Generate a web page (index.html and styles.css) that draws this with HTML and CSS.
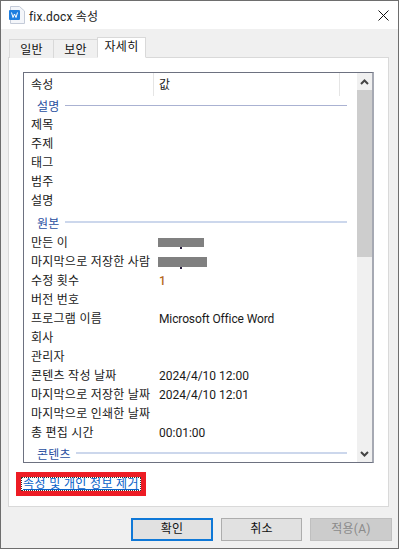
FILE: index.html
```html
<!DOCTYPE html>
<html lang="ko">
<head>
<meta charset="utf-8">
<title>fix.docx 속성</title>
<link rel="stylesheet" href="styles.css">
</head>
<body>
<div class="window">
  <div class="titlebar">
    <svg class="file-icon" width="16" height="18" viewBox="0 0 16 18">
      <path d="M1.5 .5H10.5L15.5 5V17.5H1.5Z" fill="#f4f6fa" stroke="#c4cbd8"/>
      <rect x="0" y="4" width="11" height="10" rx="1" fill="#1f7fe0"/>
      <path d="M2.5 6.5L4 11.5L5.5 8L7 11.5L8.5 6.5" fill="none" stroke="#fff" stroke-width="1"/>
    </svg>
    <span class="title">fix.docx 속성</span>
    <svg class="close" width="11" height="11" viewBox="0 0 11 11">
      <path d="M.5 .5L10.5 10.5M10.5 .5L.5 10.5" stroke="#111" stroke-width="1" fill="none"/>
    </svg>
  </div>
  <div class="body">
    <div class="tabs">
      <div class="tab">일반</div>
      <div class="tab">보안</div>
      <div class="tab active">자세히</div>
    </div>
    <div class="panel">
      <div class="list">
        <div class="rows">
          <div class="head">
            <div class="head-name">속성</div>
            <div class="head-value">값</div>
            <div class="head-rest"></div>
          </div>
          <div class="group first"><span>설명</span><i></i></div>
          <div class="row"><span class="n">제목</span></div>
          <div class="row"><span class="n">주제</span></div>
          <div class="row"><span class="n">태그</span></div>
          <div class="row"><span class="n">범주</span></div>
          <div class="row"><span class="n">설명</span></div>
          <div class="group"><span>원본</span><i class="soft"></i></div>
          <div class="row"><span class="n">만든 이</span><span class="redact r1"></span></div>
          <div class="row"><span class="n">마지막으로 저장한 사람</span><span class="redact r2"></span></div>
          <div class="row"><span class="n">수정 횟수</span><span class="v count">1</span></div>
          <div class="row"><span class="n">버전 번호</span></div>
          <div class="row"><span class="n">프로그램 이름</span><span class="v word">Microsoft Office Word</span></div>
          <div class="row"><span class="n">회사</span></div>
          <div class="row"><span class="n">관리자</span></div>
          <div class="row"><span class="n">콘텐츠 작성 날짜</span><span class="v">2024/4/10 12:00</span></div>
          <div class="row"><span class="n">마지막으로 저장한 날짜</span><span class="v">2024/4/10 12:01</span></div>
          <div class="row"><span class="n">마지막으로 인쇄한 날짜</span></div>
          <div class="row"><span class="n">총 편집 시간</span><span class="v">00:01:00</span></div>
          <div class="group last"><span>콘텐츠</span><i class="soft"></i></div>
        </div>
        <div class="scrollbar">
          <div class="arrow">
            <svg width="9" height="6" viewBox="0 0 9 6"><path d="M1 5L4.5 1.5L8 5" fill="none" stroke="#444" stroke-width="2"/></svg>
          </div>
          <div class="track"><div class="thumb"></div></div>
          <div class="arrow">
            <svg width="9" height="6" viewBox="0 0 9 6"><path d="M1 1L4.5 4.5L8 1" fill="none" stroke="#444" stroke-width="2"/></svg>
          </div>
        </div>
      </div>
      <div class="remove"><a class="remove-link">속성 및 개인 정보 제거</a></div>
    </div>
    <div class="buttons">
      <div class="btn default">확인</div>
      <div class="btn mid">취소</div>
      <div class="btn disabled">적용(A)</div>
    </div>
  </div>
</div>
</body>
</html>
```

FILE: styles.css
```css
* { box-sizing: border-box; }
html, body { margin: 0; padding: 0; }
body {
  width: 400px;
  height: 550px;
  background: #ffffff;
  font-family: Roboto, "Noto Sans CJK KR", sans-serif;
  font-size: 12px;
  color: #111;
  overflow: hidden;
}
.window {
  width: 399px;
  height: 549px;
  border: 1px solid #6e6e6e;
  display: flex;
  flex-direction: column;
}
.titlebar {
  height: 28px;
  flex: none;
  background: #fff;
  display: flex;
  align-items: center;
  padding: 0 9px 0 8px;
}
.file-icon { flex: none; }
.title { margin-left: 4px; font-size: 12px; flex: 1; color: #222; letter-spacing: .2px; }
.close { flex: none; }
.body {
  flex: 1;
  background: #f0f0f0;
  display: flex;
  flex-direction: column;
  padding: 8px 8px 0 7px;
}
.tabs { display: flex; align-items: flex-end; height: 21px; flex: none; padding-left: 1px; position: relative; z-index: 1; margin-bottom: -1px; letter-spacing: .25px; }
.tab {
  width: 45px;
  height: 19px;
  background: #f0f0f0;
  border: 1px solid #d9d9d9;
  border-bottom: none;
  margin-left: -1px;
  text-align: center;
  line-height: 20px;
}
.tab:first-child { margin-left: 0; }
.tab.active { width: 49px; height: 21px; background: #fff; line-height: 19px; border-bottom: 1px solid #fff; }
.panel {
  width: 381px;
  height: 450px;
  background: #fff;
  border: 1px solid #d9d9d9;
  padding: 14px 14px 0 14px;
  flex: none;
}
.list {
  width: 351px;
  height: 391px;
  border: 1px solid #6d7180;
  border-right: 2px solid #a6a9b3;
  display: flex;
  background: #fff;
}
.rows { flex: 1; min-width: 0; letter-spacing: .25px; }
.head { display: flex; height: 23px; line-height: 25px; color: #222; }
.head-name { width: 130px; padding-left: 7px; border-right: 1px solid #e5e5e5; }
.head-value { width: 186px; padding-left: 5px; border-right: 1px solid #e5e5e5; }
.head-rest { flex: 1; }
.group {
  display: flex;
  align-items: center;
  height: 22px;
  padding-left: 13px;
  padding-right: 10px;
  color: #2a4f9f;
  margin-top: 1px;
}
.group.first { height: 19px; margin-top: 0; }
.group.last { height: 20px; margin-top: 1px; }
.group span { flex: none; }
.group i { flex: 1; height: 1px; background: #aab2d2; margin-left: 5px; display: block; }
.group i.soft { height: 2px; background: #ccd7ec; }
.row { position: relative; display: flex; height: 19px; line-height: 21px; color: #1a1a1a; }
.n { width: 130px; padding-left: 7px; white-space: nowrap; flex: none; }
.v { padding-left: 5px; white-space: nowrap; letter-spacing: 0; }
.word { letter-spacing: -.12px; }
.count { color: #b5691f; font-weight: 500; }
.redact { position: relative; display: block; background: #808080; height: 10px; margin: 5px 0 0 4px; flex: none; }
.redact::after { content: ""; position: absolute; left: 22px; top: 100%; width: 2px; height: 2px; background: #2a2040; }
.r1 { width: 46px; height: 9px; }
.r2 { width: 49px; }
.scrollbar { width: 15px; flex: none; display: flex; flex-direction: column; background: #f0f0f0; letter-spacing: 0; }
.arrow { height: 17px; display: flex; align-items: center; justify-content: center; flex: none; }
.track { flex: 1; }
.thumb { height: 167px; background: #cdcdcd; }
.remove { margin-top: 9px; margin-left: -7px; width: 130px; height: 24px; border: 5px solid #ed1c24; display: flex; align-items: center; }
.remove-link {
  display: block;
  width: 100%;
  height: 100%;
  outline: 1px dotted #333;
  outline-offset: -1px;
  color: #0a62c8;
  text-decoration: underline;
  white-space: nowrap;
  text-align: center;
  line-height: 14px;
  letter-spacing: .35px;
  font-size: 12px;
}
.buttons {
  display: flex;
  justify-content: flex-end;
  gap: 8px;
  padding: 11px 0 0 0;
  margin-right: -2px;
  letter-spacing: .25px;
}
.btn {
  width: 82px;
  height: 23px;
  background: #e1e1e1;
  border: 1px solid #adadad;
  text-align: center;
  line-height: 21px;
  color: #111;
}
.btn.mid { width: 81px; }
.btn.default { border: 2px solid #0f78d7; line-height: 19px; }
.btn.disabled { background: #cccccc; border-color: #bfbfbf; color: #8a8a8a; }
```
